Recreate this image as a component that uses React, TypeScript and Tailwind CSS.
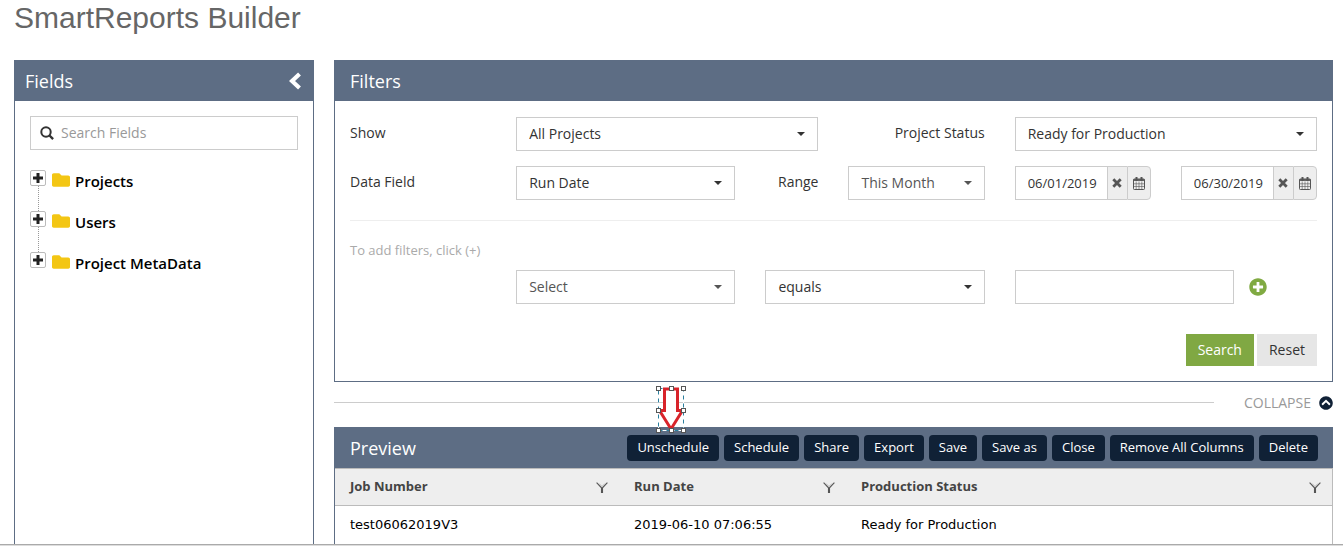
import type { ReactNode } from "react"
import { FaChevronCircleUp, FaFolder, FaPlusCircle } from "react-icons/fa"

const treeItems = ["Projects", "Users", "Project MetaData"]

const actions = [
  "Unschedule",
  "Schedule",
  "Share",
  "Export",
  "Save",
  "Save as",
  "Close",
  "Remove All Columns",
  "Delete",
]

const columns = ["Job Number", "Run Date", "Production Status"]

const rows = [["test06062019V3", "2019-06-10 07:06:55", "Ready for Production"]]

function PanelHeader({ title, className = "px-4", children }: { title: string; className?: string; children?: ReactNode }) {
  return (
    <header className={`flex h-[41px] items-center justify-between bg-[#5d6d84] text-white ${className}`}>
      <h2 className="text-lg">{title}</h2>
      {children}
    </header>
  )
}

function SelectBox({ id, label, options, muted }: { id: string; label?: string; options: string[]; muted?: boolean }) {
  return (
    <div className={`relative ${muted ? "text-[#555]" : "text-[#333]"}`}>
      <select
        id={id}
        aria-label={label}
        className="block h-[34px] w-full appearance-none border border-[#ccc] bg-white pr-8 pl-3 text-sm"
      >
        {options.map((option) => (
          <option key={option}>{option}</option>
        ))}
      </select>
      <svg viewBox="0 0 8 4" className="pointer-events-none absolute top-[15px] right-[13px] h-1 w-2" fill="currentColor">
        <path d="M0 0h8L4 4z" />
      </svg>
    </div>
  )
}

function DateBox({ label, value }: { label: string; value: string }) {
  return (
    <div className="col-span-2 flex h-[34px] text-[#555]">
      <input
        type="text"
        aria-label={label}
        defaultValue={value}
        className="w-0 min-w-0 flex-1 border border-[#ccc] bg-white pl-3 text-[13px] text-[#333]"
      />
      <button type="button" aria-label="Clear date" className="flex w-[19px] items-center justify-center border-y border-[#ccc] bg-[#eee]">
        <svg viewBox="0 0 10 10" className="size-[10px]" stroke="currentColor" strokeWidth="2.8">
          <path d="M1.3 1.3l7.4 7.4M8.7 1.3L1.3 8.7" />
        </svg>
      </button>
      <button type="button" aria-label="Open calendar" className="flex w-6 items-center justify-center rounded-r border border-[#ccc] bg-[#eee]">
        <svg viewBox="0 0 12 13" className="h-[13px] w-3" fill="none" stroke="currentColor">
          <rect x=".5" y="2" width="11" height="10.5" rx=".8" />
          <path d="M.5 3h11" strokeWidth="1.8" />
          <path d="M3.5 0v4M8.5 0v4" strokeWidth="2" />
          <path d="M.5 6.8h11M.5 9.5h11M3.2 4.5v8M6 4.5v8M8.8 4.5v8" strokeWidth=".6" />
        </svg>
      </button>
    </div>
  )
}

function FilterIcon() {
  return (
    <svg viewBox="0 0 12 11" className="h-[11px] w-3" fill="none" stroke="#555">
      <path d="M.6.6L5.5 5.8V11M11.4.6L6.5 5.8V11" strokeWidth="1.1" />
      <path d="M3 1.5l3 3 3-3" stroke="#aaa" strokeWidth=".8" />
    </svg>
  )
}

// Selected arrow shape with its resize handles
function ArrowMarker() {
  const handles = [
    [0, 0], [13, 0], [25, 0],
    [0, 22], [25, 22],
    [0, 42], [13, 42], [25, 42],
  ]
  return (
    <svg viewBox="0 0 32 48" className="absolute top-1 left-[322px] h-12 w-8" fill="none">
      <path d="M2.5 2.5h25v42h-25z" stroke="#fff" />
      <path d="M2.5 2.5h25v42h-25z" stroke="#2b7f9e" strokeDasharray="4 4" />
      <path d="M8.5 3h13v21.500h5L15 43 3.500 24.500h5z" fill="#fff" stroke="#d8232a" strokeWidth="3" />
      {handles.map(([x, y]) => (
        <rect key={`${x}-${y}`} x={x + 0.5} y={y + 0.5} width="4" height="4" fill="#fff" stroke="#555" />
      ))}
    </svg>
  )
}

function FieldsPanel() {
  return (
    <aside className="w-[300px] shrink-0 border-x border-[#5d6d84]">
      <PanelHeader title="Fields" className="pr-3 pl-[10px]">
        <button type="button" aria-label="Hide fields">
          <svg viewBox="0 0 12 18" className="h-[18px] w-3" fill="none" stroke="#fff" strokeWidth="4.2">
            <path d="M10.5 2L3 9l7.500 7" />
          </svg>
        </button>
      </PanelHeader>
      <div className="p-[15px]">
        <label className="flex h-[34px] items-center gap-[7px] border border-[#ccc] pl-[9px]">
          <svg viewBox="0 0 14 14" className="size-[14px]" fill="none" stroke="#333">
            <circle cx="6" cy="6" r="4.7" strokeWidth="2" />
            <path d="M9.500 9.500l3.600 3.600" strokeWidth="2.4" />
          </svg>
          <input
            type="text"
            aria-label="Search Fields"
            placeholder="Search Fields"
            className="min-w-0 flex-1 text-sm outline-none placeholder:text-[#999]"
          />
        </label>
        <ul className="mt-5">
          {treeItems.map((item, index) => (
            <li key={item} className="flex h-[41px]">
              <div className="flex w-4 flex-col items-center">
                <button
                  type="button"
                  aria-label={`Expand ${item}`}
                  className="flex size-4 shrink-0 items-center justify-center rounded-xs border border-[#bbb]"
                >
                  <svg viewBox="0 0 10 10" className="size-[10px]" stroke="#222" strokeWidth="3">
                    <path d="M5 0v10M0 5h10" />
                  </svg>
                </button>
                {index < treeItems.length - 1 && <span className="flex-1 border-l border-dotted border-[#999]" />}
              </div>
              <FaFolder className="mt-px ml-[6px] size-[18px] text-[#f3c614]" />
              <span className="ml-[5px] text-[15px] leading-[22px] font-semibold text-black">{item}</span>
            </li>
          ))}
        </ul>
      </div>
    </aside>
  )
}

function FiltersPanel() {
  return (
    <section className="border border-t-0 border-[#5d6d84]">
      <PanelHeader title="Filters" className="px-[15px]" />
      <form className="px-[15px] pt-4 pb-[15px] text-sm text-[#333]" onSubmit={(e) => e.preventDefault()}>
        <div className="grid grid-cols-12 gap-x-[30px] gap-y-[15px]">
          <label htmlFor="show" className="col-span-2 pt-[6px]">Show</label>
          <div className="col-span-4">
            <SelectBox id="show" options={["All Projects"]} />
          </div>
          <label htmlFor="status" className="col-span-2 pt-[6px] text-right">Project Status</label>
          <div className="col-span-4">
            <SelectBox id="status" options={["Ready for Production"]} />
          </div>

          <label htmlFor="dataField" className="col-span-2 pt-[6px]">Data Field</label>
          <div className="col-span-3">
            <SelectBox id="dataField" options={["Run Date"]} />
          </div>
          <label htmlFor="range" className="pt-[6px] text-right">Range</label>
          <div className="col-span-2">
            <SelectBox id="range" options={["This Month"]} muted />
          </div>
          <DateBox label="From" value="06/01/2019" />
          <DateBox label="To" value="06/30/2019" />
        </div>

        <hr className="mt-5 border-[#eee]" />
        <p className="mt-[19px] text-[13px] leading-5 text-[#aaa]">To add filters, click (+)</p>

        <div className="mt-[10px] grid grid-cols-12 gap-x-[30px]">
          <div className="col-span-3 col-start-3">
            <SelectBox id="filterField" label="Filter field" options={["Select"]} muted />
          </div>
          <div className="col-span-3">
            <SelectBox id="operator" label="Operator" options={["equals"]} />
          </div>
          <input type="text" aria-label="Filter value" className="col-span-3 h-[34px] min-w-0 border border-[#ccc] px-3" />
          <button type="button" aria-label="Add filter" className="-ml-[15px] justify-self-start text-[#80aa42]">
            <FaPlusCircle className="size-[18px]" />
          </button>
        </div>

        <div className="mt-[30px] flex justify-end gap-[3px]">
          <button type="submit" className="h-8 bg-[#80a843] px-3 text-white">Search</button>
          <button type="reset" className="h-8 bg-[#e6e6e6] px-3">Reset</button>
        </div>
      </form>
    </section>
  )
}

function PreviewPanel() {
  return (
    <section className="flex-1 border-l border-[#5d6d84]">
      <PanelHeader title="Preview" className="px-[15px]">
        <div className="flex gap-[5px]">
          {actions.map((action) => (
            <button key={action} type="button" className="h-[26px] rounded bg-[#102136] px-[10px] text-[13px] whitespace-nowrap">
              {action}
            </button>
          ))}
        </div>
      </PanelHeader>
      <table className="w-full table-fixed border-r border-[#bbb] text-left text-[13px]">
        <colgroup>
          <col className="w-[284px]" />
          <col className="w-[227px]" />
          <col />
        </colgroup>
        <thead>
          <tr className="h-[37px] border-y border-[#bbb] bg-[#eee] text-[#444]">
            {columns.map((column) => (
              <th key={column} className="pr-[11px] pl-[15px] font-bold">
                <div className="flex items-center justify-between">
                  {column}
                  <button type="button" aria-label={`Filter ${column}`}>
                    <FilterIcon />
                  </button>
                </div>
              </th>
            ))}
          </tr>
        </thead>
        <tbody>
          {rows.map((row) => (
            <tr key={row[0]} className="h-[38px] font-['DejaVu_Sans',Verdana,sans-serif] text-black">
              {row.map((cell) => (
                <td key={cell} className="pl-[15px]">{cell}</td>
              ))}
            </tr>
          ))}
        </tbody>
      </table>
    </section>
  )
}

export default function App() {
  return (
    <div className="flex min-h-screen flex-col bg-white font-['Open_Sans',sans-serif]">
      <h1 className="h-[60px] pl-[14px] font-['Liberation_Sans',Arial,sans-serif] text-3xl text-[#666]">SmartReports Builder</h1>
      <main className="flex flex-1 gap-5 pr-[10px] pl-[14px]">
        <FieldsPanel />
        <div className="flex min-w-0 flex-1 flex-col">
          <FiltersPanel />
          <div className="relative mb-1 flex h-[41px] items-center gap-[30px]">
            <span className="h-px flex-1 bg-[#ccc]" />
            <button type="button" className="flex items-center gap-2 text-sm text-[#999]">
              COLLAPSE
              <FaChevronCircleUp className="size-[14px] text-[#102136]" />
            </button>
            <ArrowMarker />
          </div>
          <PreviewPanel />
        </div>
      </main>
      <footer className="h-[2px] border-t border-[#aaa] bg-[#ddd]" />
    </div>
  )
}
